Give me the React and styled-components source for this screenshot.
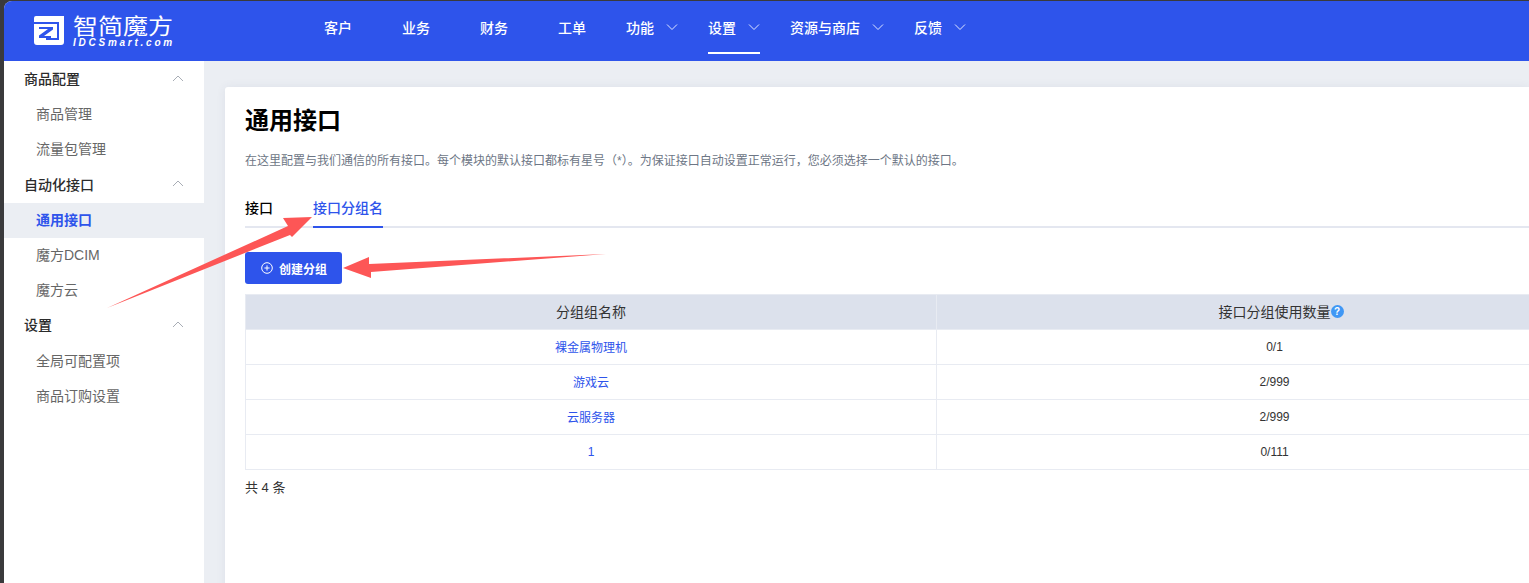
import styled, { createGlobalStyle } from "styled-components";

const GlobalStyle = createGlobalStyle`
  html, body {
    margin: 0;
    height: 100%;
    overflow: hidden;
    background: #3a3a3c;
  }
  body {
    font-family: "Liberation Sans", "Noto Sans CJK SC", sans-serif;
  }
`;

const Frame = styled.div`
  position: relative;
  width: 1529px;
  height: 583px;
  padding: 1px 0 0 4px;
  box-sizing: border-box;
  overflow: hidden;
`;

const Window = styled.div`
  height: 582px;
  display: flex;
  flex-direction: column;
  border-top-left-radius: 8px;
  overflow: hidden;
  background: #ebeef3;
`;

const Header = styled.header`
  flex: none;
  height: 60px;
  background: #2e54eb;
  display: flex;
  align-items: stretch;
`;

const Logo = styled.div`
  width: 310px;
  flex: none;
  display: flex;
  align-items: flex-start;
  gap: 9px;
  padding: 15px 0 0 30px;
  box-sizing: border-box;
  color: #fff;
`;

const LogoWords = styled.div`
  display: flex;
  flex-direction: column;
`;

const LogoName = styled.span`
  font-size: 25px;
  line-height: 21px;
  font-weight: 400;
  font-family: "Noto Sans CJK SC", sans-serif;
  transform: scaleY(0.85);
  transform-origin: top;
`;

const LogoSub = styled.span`
  font-size: 10px;
  line-height: 11px;
  font-weight: 700;
  font-style: italic;
  letter-spacing: 2.75px;
  white-space: nowrap;
`;

const Nav = styled.nav`
  display: flex;
  gap: 30px;
`;

const NavItem = styled.div`
  display: flex;
  align-items: center;
  gap: 12px;
  padding: ${(p) => (p.$menu ? "0" : "0 10px")};
  color: #fff;
  font-size: 14px;
  font-weight: 500;
  font-family: "Noto Sans CJK SC", sans-serif;
  height: 53px;
  box-sizing: border-box;
  border-bottom: 2px solid ${(p) => (p.$active ? "#fff" : "transparent")};
`;

const NavArrow = styled.svg`
  flex: none;
  margin-top: 1px;
`;

const Body = styled.div`
  flex: 1;
  display: flex;
  min-height: 0;
`;

const Sidebar = styled.aside`
  flex: none;
  width: 200px;
  background: #fff;
  padding-top: 1px;
`;

const GroupTitle = styled.div`
  height: 35.2px;
  box-sizing: border-box;
  display: flex;
  align-items: center;
  justify-content: space-between;
  padding: 0 20px 3px;
  font-size: 14px;
  font-weight: 500;
  color: #2b2b2b;
  font-family: "Noto Sans CJK SC", sans-serif;
`;

const SideItem = styled.div`
  height: 35.2px;
  box-sizing: border-box;
  display: flex;
  align-items: center;
  padding: 0 0 3px 32px;
  font-size: 14px;
  font-weight: ${(p) => (p.$active ? 700 : 400)};
  color: ${(p) => (p.$active ? "#2e54eb" : "#666")};
  background: ${(p) => (p.$active ? "#ebeef3" : "transparent")};
`;

const Main = styled.main`
  flex: 1;
  min-width: 0;
  padding: 26px 0 0 21px;
`;

const Card = styled.section`
  height: 520px;
  background: #fff;
  border-radius: 3px 0 0 0;
  padding: 14px 0 0 20px;
  box-shadow: 0 0 10px rgba(60, 80, 120, 0.08);
  overflow: hidden;
`;

const Title = styled.h1`
  margin: 0;
  font-size: 24px;
  line-height: 36px;
  font-weight: 700;
  color: #000;
  font-family: "Noto Sans CJK SC", sans-serif;
`;

const Desc = styled.p`
  margin: 14px 0 0;
  font-size: 12px;
  line-height: 20px;
  color: #6d7685;
`;

const Tabs = styled.div`
  margin-top: 19px;
  height: 38px;
  box-sizing: border-box;
  display: flex;
  gap: 40px;
  border-bottom: 2px solid #e4e7f0;
`;

const Tab = styled.div`
  height: 38px;
  box-sizing: border-box;
  padding-top: 7px;
  font-size: 14px;
  font-weight: 500;
  line-height: 20px;
  font-family: "Noto Sans CJK SC", sans-serif;
  color: ${(p) => (p.$active ? "#2e54eb" : "#000")};
  border-bottom: 2px solid ${(p) => (p.$active ? "#2e54eb" : "transparent")};
`;

const CreateButton = styled.button`
  margin-top: 24px;
  width: 97px;
  height: 32px;
  padding: 0 0 0 1px;
  border: 0;
  border-radius: 3px;
  background: #2e54eb;
  color: #fff;
  display: flex;
  align-items: center;
  justify-content: center;
  gap: 6px;
  font-size: 12px;
  font-weight: 700;
  font-family: "Noto Sans CJK SC", sans-serif;
`;

const Table = styled.table`
  margin-top: 10px;
  width: 1367px;
  table-layout: fixed;
  border-collapse: collapse;
`;

const HeadCell = styled.th`
  height: 32px;
  padding: 0 0 2px;
  background: #dce1ec;
  border: 1px solid #e8ebf2;
  font-size: 14px;
  font-weight: 400;
  color: #333;
  text-align: center;
`;

const Cell = styled.td`
  height: 33px;
  padding: 0 0 1px;
  border: 1px solid #e8ebf2;
  font-size: 12px;
  text-align: center;
  color: ${(p) => (p.$link ? "#2e54eb" : "#333")};
`;

const HeadLabel = styled.span`
  position: relative;
  display: inline-block;
`;

const HelpDot = styled.span`
  position: absolute;
  top: 50%;
  left: 100%;
  margin-top: -6px;
  display: flex;
  align-items: center;
  justify-content: center;
  width: 13px;
  height: 13px;
  border-radius: 50%;
  background: #3f97f5;
  color: #fff;
  font-size: 10px;
  font-weight: 700;
  line-height: 1;
`;

const Total = styled.div`
  margin-top: 9px;
  font-size: 13px;
  line-height: 18px;
  color: #333;
`;

const Arrows = styled.svg`
  position: absolute;
  inset: 0;
  pointer-events: none;
`;

const sideGroups = [
  { title: "商品配置", items: ["商品管理", "流量包管理"] },
  { title: "自动化接口", items: ["通用接口", "魔方DCIM", "魔方云"] },
  { title: "设置", items: ["全局可配置项", "商品订购设置"] },
];

const navItems = [
  { label: "客户" },
  { label: "业务" },
  { label: "财务" },
  { label: "工单" },
  { label: "功能", menu: true },
  { label: "设置", menu: true, active: true },
  { label: "资源与商店", menu: true },
  { label: "反馈", menu: true },
];

const rows = [
  ["裸金属物理机", "0/1"],
  ["游戏云", "2/999"],
  ["云服务器", "2/999"],
  ["1", "0/111"],
];

const LogoMark = () => (
  <svg width="30" height="29" viewBox="0 0 30 29">
    <path
      fill="#fff"
      fillRule="evenodd"
      d="M2 0H30V26a3 3 0 0 1-3 3H3a3 3 0 0 1-3-3V2a2 2 0 0 1 2-2ZM0 6H25V24H12V22H23V8H0ZM5 11H19V13.5L10 20H17V22H5V19.5L14 13H5Z"
    />
  </svg>
);

const PlusCircle = () => (
  <svg width="12" height="12" viewBox="0 0 12 12" fill="none" stroke="#fff" strokeWidth="1">
    <circle cx="6" cy="6" r="5.3" />
    <path d="M6 3.4v5.2M3.4 6h5.2" />
  </svg>
);

const NavChevron = () => (
  <NavArrow width="12" height="8" viewBox="0 0 12 8" fill="none" stroke="#dfe6ff" strokeWidth="1">
    <path d="M1 1.5 6 6.5 11 1.5" />
  </NavArrow>
);

const GroupChevron = () => (
  <svg width="12" height="7" viewBox="0 0 12 7" fill="none" stroke="#a8adb5" strokeWidth="1">
    <path d="M1 6 6 1 11 6" />
  </svg>
);

export default function App() {
  return (
    <Frame>
      <GlobalStyle />
      <Window>
        <Header>
          <Logo>
            <LogoMark />
            <LogoWords>
              <LogoName>智简魔方</LogoName>
              <LogoSub>IDCSmart.com</LogoSub>
            </LogoWords>
          </Logo>
          <Nav>
            {navItems.map((item) => (
              <NavItem key={item.label} $menu={item.menu} $active={item.active}>
                {item.label}
                {item.menu && <NavChevron />}
              </NavItem>
            ))}
          </Nav>
        </Header>
        <Body>
          <Sidebar>
            {sideGroups.map((group) => (
              <div key={group.title}>
                <GroupTitle>
                  {group.title}
                  <GroupChevron />
                </GroupTitle>
                {group.items.map((item) => (
                  <SideItem key={item} $active={item === "通用接口"}>
                    {item}
                  </SideItem>
                ))}
              </div>
            ))}
          </Sidebar>
          <Main>
            <Card>
              <Title>通用接口</Title>
              <Desc>在这里配置与我们通信的所有接口。每个模块的默认接口都标有星号（*）。为保证接口自动设置正常运行，您必须选择一个默认的接口。</Desc>
              <Tabs>
                <Tab>接口</Tab>
                <Tab $active>接口分组名</Tab>
              </Tabs>
              <CreateButton>
                <PlusCircle />
                创建分组
              </CreateButton>
              <Table>
                <colgroup>
                  <col width="691" />
                  <col width="676" />
                </colgroup>
                <thead>
                  <tr>
                    <HeadCell>分组组名称</HeadCell>
                    <HeadCell>
                      <HeadLabel>
                        接口分组使用数量
                        <HelpDot>?</HelpDot>
                      </HeadLabel>
                    </HeadCell>
                  </tr>
                </thead>
                <tbody>
                  {rows.map(([name, count]) => (
                    <tr key={name}>
                      <Cell $link>{name}</Cell>
                      <Cell>{count}</Cell>
                    </tr>
                  ))}
                </tbody>
              </Table>
              <Total>共 4 条</Total>
            </Card>
          </Main>
        </Body>
      </Window>
      <Arrows width="1529" height="583" viewBox="0 0 1529 583">
        <path fill="#fd5656" d="M107 308 288 226 283 218 312 217 292 237 290 235Z" />
        <path fill="#fd5656" d="M606 254 369 264 369 257 343 268 371 278 371 272Z" />
      </Arrows>
    </Frame>
  );
}
